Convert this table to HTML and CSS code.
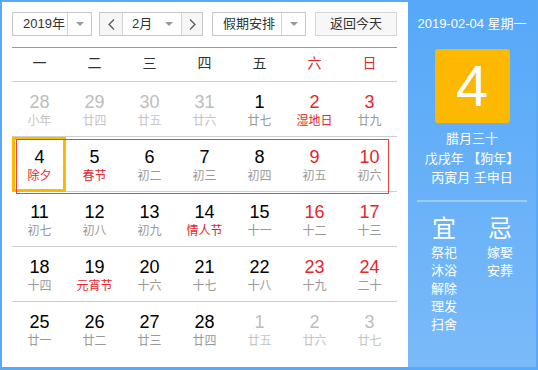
FILE: index.html
```html
<!DOCTYPE html>
<html lang="zh-CN">
<head>
<meta charset="utf-8">
<title>万年历</title>
<link rel="stylesheet" href="styles.css">
</head>
<body>
<div class="cal">
  <div class="main">
    <div class="toolbar">
      <div class="sel sel-year">
        <span class="sel-text">2019年</span>
        <span class="sel-arrow"><i class="tri"></i></span>
      </div>
      <div class="sel sel-month">
        <span class="nav nav-prev"><svg width="7" height="11" viewBox="0 0 7 11"><polyline points="6,0.5 1,5.5 6,10.5" fill="none" stroke="#555" stroke-width="1.2"/></svg></span>
        <span class="sel-text month-text">2月<i class="tri"></i></span>
        <span class="nav nav-next"><svg width="7" height="11" viewBox="0 0 7 11"><polyline points="1,0.5 6,5.5 1,10.5" fill="none" stroke="#555" stroke-width="1.2"/></svg></span>
      </div>
      <div class="sel sel-holiday">
        <span class="sel-text">假期安排</span>
        <span class="sel-arrow"><i class="tri"></i></span>
      </div>
      <div class="btn-today">返回今天</div>
    </div>
    <div class="week-head">
      <span>一</span><span>二</span><span>三</span><span>四</span><span>五</span><span class="red">六</span><span class="red">日</span>
    </div>
    <div class="grid">
      <div class="row">
        <div class="cell other"><div class="num">28</div><div class="lunar">小年</div></div>
        <div class="cell other"><div class="num">29</div><div class="lunar">廿四</div></div>
        <div class="cell other"><div class="num">30</div><div class="lunar">廿五</div></div>
        <div class="cell other"><div class="num">31</div><div class="lunar">廿六</div></div>
        <div class="cell"><div class="num">1</div><div class="lunar">廿七</div></div>
        <div class="cell wk"><div class="num">2</div><div class="lunar fest">湿地日</div></div>
        <div class="cell wk"><div class="num">3</div><div class="lunar">廿九</div></div>
      </div>
      <div class="row row-current">
        <div class="cell selected"><div class="num">4</div><div class="lunar fest">除夕</div></div>
        <div class="cell"><div class="num">5</div><div class="lunar fest">春节</div></div>
        <div class="cell"><div class="num">6</div><div class="lunar">初二</div></div>
        <div class="cell"><div class="num">7</div><div class="lunar">初三</div></div>
        <div class="cell"><div class="num">8</div><div class="lunar">初四</div></div>
        <div class="cell wk"><div class="num">9</div><div class="lunar">初五</div></div>
        <div class="cell wk"><div class="num">10</div><div class="lunar">初六</div></div>
      </div>
      <div class="row">
        <div class="cell"><div class="num">11</div><div class="lunar">初七</div></div>
        <div class="cell"><div class="num">12</div><div class="lunar">初八</div></div>
        <div class="cell"><div class="num">13</div><div class="lunar">初九</div></div>
        <div class="cell"><div class="num">14</div><div class="lunar fest">情人节</div></div>
        <div class="cell"><div class="num">15</div><div class="lunar">十一</div></div>
        <div class="cell wk"><div class="num">16</div><div class="lunar">十二</div></div>
        <div class="cell wk"><div class="num">17</div><div class="lunar">十三</div></div>
      </div>
      <div class="row">
        <div class="cell"><div class="num">18</div><div class="lunar">十四</div></div>
        <div class="cell"><div class="num">19</div><div class="lunar fest">元宵节</div></div>
        <div class="cell"><div class="num">20</div><div class="lunar">十六</div></div>
        <div class="cell"><div class="num">21</div><div class="lunar">十七</div></div>
        <div class="cell"><div class="num">22</div><div class="lunar">十八</div></div>
        <div class="cell wk"><div class="num">23</div><div class="lunar">十九</div></div>
        <div class="cell wk"><div class="num">24</div><div class="lunar">二十</div></div>
      </div>
      <div class="row">
        <div class="cell"><div class="num">25</div><div class="lunar">廿一</div></div>
        <div class="cell"><div class="num">26</div><div class="lunar">廿二</div></div>
        <div class="cell"><div class="num">27</div><div class="lunar">廿三</div></div>
        <div class="cell"><div class="num">28</div><div class="lunar">廿四</div></div>
        <div class="cell other"><div class="num">1</div><div class="lunar">廿五</div></div>
        <div class="cell other"><div class="num">2</div><div class="lunar">廿六</div></div>
        <div class="cell other"><div class="num">3</div><div class="lunar">廿七</div></div>
      </div>
    </div>
  </div>
  <div class="side">
    <div class="side-date">2019-02-04 星期一</div>
    <div class="big-day">4</div>
    <div class="side-lunar">
      <div>腊月三十</div>
      <div>戊戌年 【狗年】</div>
      <div>丙寅月 壬申日</div>
    </div>
    <div class="side-sep"></div>
    <div class="yiji">
      <div class="yj-col">
        <div class="yj-title">宜</div>
        <div class="yj-item">祭祀</div>
        <div class="yj-item">沐浴</div>
        <div class="yj-item">解除</div>
        <div class="yj-item">理发</div>
        <div class="yj-item">扫舍</div>
      </div>
      <div class="yj-col">
        <div class="yj-title">忌</div>
        <div class="yj-item">嫁娶</div>
        <div class="yj-item">安葬</div>
      </div>
    </div>
  </div>
</div>
</body>
</html>
```

FILE: styles.css
```css
* { box-sizing: border-box; }
html, body { margin: 0; padding: 0; background: #fff; }
body {
  font-family: "Liberation Sans", "Noto Sans CJK SC", sans-serif;
  color: #333;
}
.cal {
  width: 538px;
  height: 370px;
  border: 2px solid #5aa9f7;
  border-bottom-width: 3px;
  display: flex;
  background: #fff;
}
.main {
  width: 406px;
  padding: 0 11px 0 10px;
}
.toolbar {
  display: flex;
  padding-top: 10px;
  padding-bottom: 11px;
  border-bottom: 1px solid #5aa9f7;
}
.sel {
  display: flex;
  height: 24px;
  border: 1px solid #c6c6c6;
  font-size: 13px;
  line-height: 22px;
  color: #333;
  background: #fff;
}
.sel-text { padding-left: 10px; flex: 1; }
.sel-arrow {
  width: 24px;
  border-left: 1px solid #d4d4d4;
  display: flex;
  align-items: center;
  justify-content: center;
}
.tri {
  display: inline-block;
  width: 0;
  height: 0;
  border-left: 4px solid transparent;
  border-right: 4px solid transparent;
  border-top: 4px solid #999;
}
.sel-year { width: 80px; }
.sel-month { width: 104px; margin-left: 7px; }
.sel-holiday { width: 94px; margin-left: 9px; }
.nav {
  width: 23px;
  background: #f6f6f6;
  display: flex;
  align-items: center;
  justify-content: center;
}
.nav-prev { border-right: 1px solid #d4d4d4; width: 23px; }
.nav-next { border-left: 1px solid #d4d4d4; width: 21px; }
.month-text {
  display: flex;
  align-items: center;
  justify-content: space-between;
  padding-left: 9px;
  padding-right: 8px;
}
.btn-today {
  width: 82px;
  height: 24px;
  margin-left: 9px;
  border: 1px solid #d6d6d6;
  background: #f7f7f7;
  font-size: 13px;
  line-height: 22px;
  text-align: center;
  color: #333;
}
.week-head {
  display: flex;
  height: 33px;
  line-height: 31px;
  font-size: 14px;
  color: #333;
}
.week-head span { width: 55px; text-align: center; }
.week-head .red { color: #e5262c; }
.row {
  display: flex;
  height: 55px;
  border-top: 1px solid #cfcfcf;
  position: relative;
}
.row-current::after {
  content: "";
  position: absolute;
  top: 2px;
  left: 4px;
  right: 8px;
  bottom: -3px;
  border: 1px solid #f04040;
  pointer-events: none;
  z-index: 2;
}
.cell {
  width: 55px;
  text-align: center;
  padding-top: 9px;
  position: relative;
}
.num {
  font-size: 18px;
  line-height: 22px;
  color: #000;
}
.lunar {
  font-size: 12px;
  line-height: 16px;
  color: #999;
}
.wk .num { color: #e5262c; }
.lunar.fest { color: #e5262c; }
.other .num { color: #bdbdbd; }
.other .lunar { color: #c4c4c4; }
.selected::after {
  content: "";
  position: absolute;
  top: 0;
  left: 0;
  right: 1px;
  bottom: -1px;
  border: 3px solid #fdb900;
  z-index: 1;
}
.side {
  flex: 1;
  background: linear-gradient(#56a8f8, #7abaf9);
  color: #fff;
  display: flex;
  flex-direction: column;
  align-items: center;
  padding-top: 12px;
}
.side-date {
  font-size: 13px;
  line-height: 20px;
}
.big-day {
  margin-top: 15px;
  width: 75px;
  height: 74px;
  background: #fdb902;
  border-radius: 3px;
  font-size: 58px;
  line-height: 74px;
  text-align: center;
  color: #fff;
}
.side-lunar {
  margin-top: 6px;
  font-size: 13px;
  line-height: 19.5px;
  text-align: center;
}
.side-sep {
  margin-top: 12px;
  width: 110px;
  height: 2px;
  background: rgba(255,255,255,0.35);
}
.yiji {
  display: flex;
  margin-top: 12px;
}
.yj-col {
  width: 56px;
  text-align: center;
  display: flex;
  flex-direction: column;
  align-items: center;
}
.yj-title {
  font-size: 24px;
  line-height: 30px;
}
.yj-item {
  font-size: 13px;
  line-height: 18px;
}
```
